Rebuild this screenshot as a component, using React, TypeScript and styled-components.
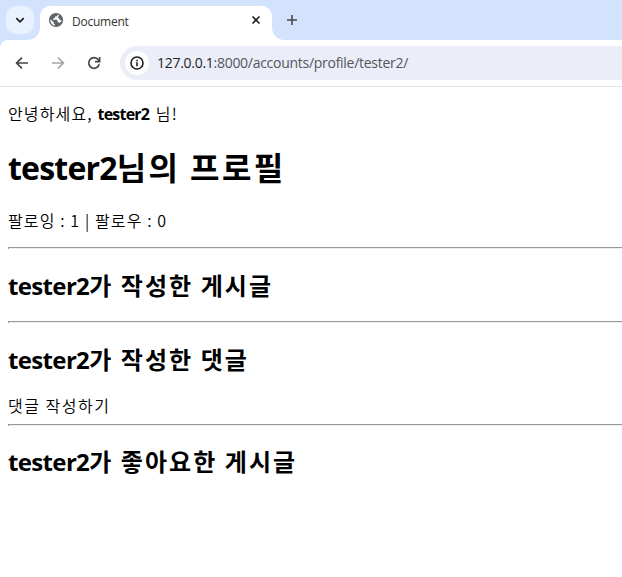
import React from "react";
import styled, { createGlobalStyle } from "styled-components";

const GlobalStyle = createGlobalStyle`
  * { box-sizing: border-box; }
  html, body { margin: 0; background: #fff; overflow: hidden; }
`;

const Window = styled.div`
  width: 622px;
  height: 577px;
  overflow: hidden;
  background: #fff;
  color: #000;
`;

const TabStrip = styled.div`
  display: flex;
  height: 40px;
  padding: 6px 0 0 6px;
  background: #d3e2fd;
`;

const TabSearch = styled.div`
  display: grid;
  place-items: center;
  width: 28px;
  height: 28px;
  margin-right: 6px;
  border-radius: 10px;
  background: #e9f1fe;
`;

const Tab = styled.div`
  position: relative;
  display: flex;
  align-items: center;
  width: 232px;
  height: 34px;
  padding: 0 11px 6px 8px;
  border-radius: 10px 10px 0 0;
  background: #fff;

  &::before,
  &::after {
    content: "";
    position: absolute;
    bottom: 0;
    width: 12px;
    height: 12px;
  }
  &::before {
    left: -12px;
    background: radial-gradient(circle at 0 0, transparent 11.5px, #fff 12.2px);
  }
  &::after {
    right: -12px;
    background: radial-gradient(circle at 100% 0, transparent 11.5px, #fff 12.2px);
  }
`;

const TabTitle = styled.span`
  flex: 1;
  margin-left: 8px;
  padding-top: 3px;
  font: 12px/18px "Open Sans", "Noto Sans", sans-serif;
  letter-spacing: -0.25px;
  color: #333;
`;

const NewTab = styled.div`
  display: grid;
  place-items: center;
  width: 28px;
  height: 28px;
  margin-left: 6px;
`;

const Toolbar = styled.div`
  display: flex;
  align-items: center;
  height: 47px;
  padding: 0 0 0 8px;
  border-bottom: 1px solid #dfe1e4;
  background: radial-gradient(circle at 8px 8px, #fff 7.6px, #d3e2fd 8.3px) 0 0 / 8px 8px no-repeat #fff;
`;

const NavButton = styled.div<{ $muted?: boolean }>`
  display: grid;
  place-items: center;
  width: 28px;
  height: 28px;
  margin-right: 8px;
  color: ${(p) => (p.$muted ? "#a5a5a5" : "#454746")};
`;

const AddressBar = styled.div`
  display: flex;
  align-items: center;
  flex: 1;
  height: 34px;
  margin-left: 4px;
  padding-left: 5px;
  border-radius: 17px 0 0 17px;
  background: #ebeef8;
`;

const SiteInfo = styled.div`
  display: grid;
  place-items: center;
  width: 24px;
  height: 24px;
  margin-right: 8px;
  border-radius: 50%;
  background: #fff;
`;

const Url = styled.span`
  font: 14px/20px "Open Sans", "Noto Sans", sans-serif;
  letter-spacing: -0.28px;
  white-space: nowrap;
  color: #53565b;
`;

const Host = styled.span`
  color: #1f1f1f;
`;

const Page = styled.main`
  padding: 15px 0 0 8px;
  font: 350 16px/22px "Noto Sans CJK KR", sans-serif;
`;

const Latin = styled.span<{ $track?: number }>`
  font-family: "Open Sans", "Noto Sans", sans-serif;
  letter-spacing: ${(p) => p.$track ?? 0}px;
`;

const Paragraph = styled.p<{ $bottom: number; $track?: number }>`
  height: 22px;
  margin: 0 0 ${(p) => p.$bottom}px;
  letter-spacing: ${(p) => p.$track ?? 1.15}px;
  white-space: nowrap;
`;

const Username = styled.strong`
  margin-right: 2px;
  font-family: "Open Sans", "Noto Sans", sans-serif;
  font-weight: 700;
  letter-spacing: -0.8px;
`;

const Title = styled.h1`
  height: 43px;
  margin: 0 0 21px;
  font-size: 32px;
  line-height: 43px;
  font-weight: 700;
  letter-spacing: 2.4px;
  white-space: nowrap;
`;

const Divider = styled.hr`
  height: 2px;
  margin: 0;
  border: 0;
  border-top: 1px solid #9a9a9a;
  border-left: 1px solid #9a9a9a;
  background: #eee;
`;

const SectionTitle = styled.h2`
  height: 32px;
  margin: 0;
  padding: 0;
  font-size: 24px;
  line-height: 32px;
  font-weight: 700;
  letter-spacing: 2.05px;
  white-space: nowrap;
`;

const Section = styled.section<{ $height: number; $top?: number }>`
  height: ${(p) => p.$height}px;
  padding-top: ${(p) => p.$top ?? 20}px;
`;

const WriteComment = styled.div`
  margin-top: 19px;
  line-height: 22px;
  letter-spacing: 1.5px;
`;

const SectionHeading = ({ children }: { children: React.ReactNode }) => (
  <SectionTitle>
    <Latin $track={-0.65}>tester2</Latin>
    {children}
  </SectionTitle>
);

const App = () => (
  <>
    <GlobalStyle />
    <Window>
      <TabStrip>
        <TabSearch>
          <svg width="10" height="10" viewBox="0 0 10 10" fill="none" stroke="#1f1f1f" strokeWidth="1.8">
            <path d="M1.3 3.2 5 6.8 8.7 3.2" />
          </svg>
        </TabSearch>
        <Tab>
          <svg width="16" height="16" viewBox="0 0 16 16">
            <circle cx="8" cy="8" r="7.1" fill="#5f6368" />
            <path
              d="M2.2 7.3 5.7 10.3v.8c0 .7.6 1.3 1.3 1.3v1.4A6 6 0 0 1 2.2 7.3Z M9.8 2.3c-.1 1.4-.6 2-1.6 2.1H6.9v1.3c0 .5-.4.7-.9.7H4.9v1.4h3.9c.5 0 .7.3.7.7v1.8h.9c.5 0 1 .3 1.2.8A6 6 0 0 0 13.7 8.2c-.5-.2-1.2 0-1.8-.5-.6-.5-.4-1.2-1.2-1.5-.6-.3-1.2-.4-1-1.2.2-.7 1.2-.5 1.6-1.1Z"
              fill="#fff"
            />
          </svg>
          <TabTitle>Document</TabTitle>
          <svg width="10" height="10" viewBox="0 0 10 10" stroke="#1f1f1f" strokeWidth="1.6">
            <path d="m1.5 1.5 7 7M8.5 1.5l-7 7" />
          </svg>
        </Tab>
        <NewTab>
          <svg width="12" height="12" viewBox="0 0 12 12" stroke="#474747" strokeWidth="1.6">
            <path d="M6 1v10M1 6h10" />
          </svg>
        </NewTab>
      </TabStrip>

      <Toolbar>
        <NavButton>
          <svg width="14" height="14" viewBox="0 0 14 14" fill="none" stroke="currentColor" strokeWidth="1.7">
            <path d="M13 7H2.2M7 1.6 1.6 7 7 12.4" />
          </svg>
        </NavButton>
        <NavButton $muted>
          <svg width="14" height="14" viewBox="0 0 14 14" fill="none" stroke="currentColor" strokeWidth="1.6">
            <path d="M1 7h10.8M7 1.6 12.4 7 7 12.4" />
          </svg>
        </NavButton>
        <NavButton>
          <svg width="14" height="14" viewBox="0 0 14 14" fill="none" stroke="currentColor" strokeWidth="1.7">
            <path d="M12.2 8.2A5.3 5.3 0 1 1 11.3 3.8L12.5 5.2" />
            <path d="M12.6 1v4.6H8" />
          </svg>
        </NavButton>
        <AddressBar>
          <SiteInfo>
            <svg width="16" height="16" viewBox="0 0 16 16" fill="none" stroke="#1f1f1f" strokeWidth="1.6">
              <circle cx="8" cy="8" r="6" />
              <path d="M8 7.3v4M8 4.7v1.6" />
            </svg>
          </SiteInfo>
          <Url>
            <Host>127.0.0.1</Host>:8000/accounts/profile/tester2/
          </Url>
        </AddressBar>
      </Toolbar>

      <Page>
        <Paragraph $bottom={21}>
          안녕하세요, <Username>tester2</Username> 님!
        </Paragraph>
        <Title>
          <Latin $track={-0.8}>tester2</Latin>님의 프로필
        </Title>
        <Paragraph $bottom={16} $track={1.12}>
          팔로잉 : 1 | 팔로우 : 0
        </Paragraph>
        <Divider />
        <Section $height={72}>
          <SectionHeading>가 작성한 게시글</SectionHeading>
        </Section>
        <Divider />
        <Section $height={101}>
          <SectionHeading>가 작성한 댓글</SectionHeading>
          <WriteComment>댓글 작성하기</WriteComment>
        </Section>
        <Divider />
        <Section $height={72} $top={19}>
          <SectionHeading>가 좋아요한 게시글</SectionHeading>
        </Section>
      </Page>
    </Window>
  </>
);

export default App;
